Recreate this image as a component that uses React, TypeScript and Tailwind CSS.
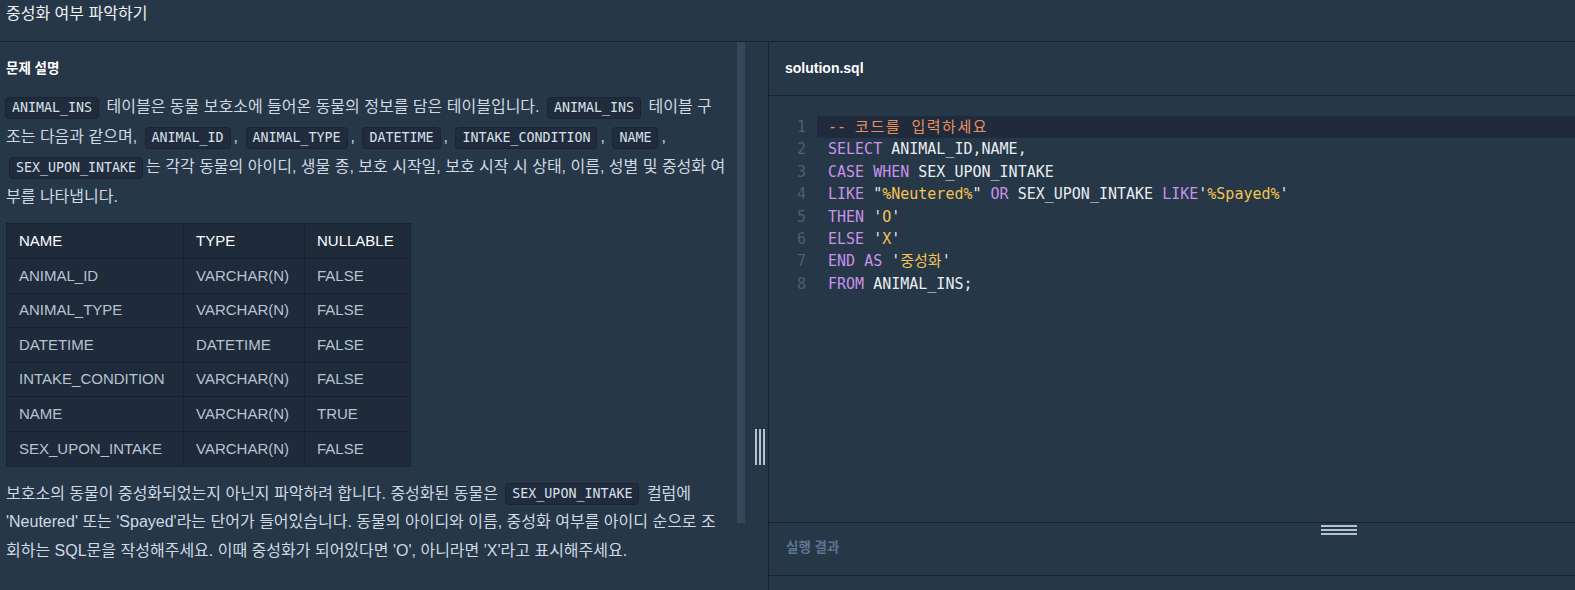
import React from 'react';

const sans = "font-['Liberation_Sans','Noto_Sans_CJK_KR',sans-serif]";

function Code({ children, first }: { children: React.ReactNode; first?: boolean }) {
  return (
    <code
      className={`${first ? 'mr-[3px] -ml-[1px]' : 'mx-[3px]'} inline-block rounded-[4px] border border-[#1b2433] bg-[#202b3d] px-[6px] align-middle font-['DejaVu_Sans_Mono',monospace] text-[13.3px] leading-[20px] text-[#d9e1e8]`}
    >
      {children}
    </code>
  );
}

const columns = [
  ['ANIMAL_ID', 'VARCHAR(N)', 'FALSE'],
  ['ANIMAL_TYPE', 'VARCHAR(N)', 'FALSE'],
  ['DATETIME', 'DATETIME', 'FALSE'],
  ['INTAKE_CONDITION', 'VARCHAR(N)', 'FALSE'],
  ['NAME', 'VARCHAR(N)', 'TRUE'],
  ['SEX_UPON_INTAKE', 'VARCHAR(N)', 'FALSE'],
];

const K = ({ t }: { t: string }) => <span className="text-[#c792ea]">{t}</span>;
const S = ({ t }: { t: string }) => <span className="text-[#f5c451]">{t}</span>;
const Q = ({ t }: { t: string }) => <span className="text-[#e6e9ee]">{t}</span>;

const lines: React.ReactNode[] = [
  <span className="text-[#ea8f61]">
    -- <span className="tracking-[1.5px]">코드를 입력하세요</span>
  </span>,
  <>
    <K t="SELECT" /> ANIMAL_ID,NAME,
  </>,
  <>
    <K t="CASE" /> <K t="WHEN" /> SEX_UPON_INTAKE
  </>,
  <>
    <K t="LIKE" /> <Q t={'"'} />
    <S t="%Neutered%" />
    <Q t={'"'} /> <K t="OR" /> SEX_UPON_INTAKE <K t="LIKE" />
    <Q t="'" />
    <S t="%Spayed%" />
    <Q t="'" />
  </>,
  <>
    <K t="THEN" /> <Q t="'" />
    <S t="O" />
    <Q t="'" />
  </>,
  <>
    <K t="ELSE" /> <Q t="'" />
    <S t="X" />
    <Q t="'" />
  </>,
  <>
    <K t="END" /> <K t="AS" /> <Q t="'" />
    <S t="중성화" />
    <Q t="'" />
  </>,
  <>
    <K t="FROM" /> ANIMAL_INS;
  </>,
];

export default function App() {
  return (
    <div className={`flex h-screen w-full flex-col overflow-hidden bg-[#263747] ${sans}`}>
      {/* title bar */}
      <div className="h-[42px] shrink-0 border-b border-[#172130] pl-[6px] pt-[3px]">
        <h1 className="text-[16px] leading-[22px] text-[#eef1f4]">중성화 여부 파악하기</h1>
      </div>

      <div className="flex min-h-0 flex-1">
        {/* left: description */}
        <div className="flex w-[769px] shrink-0 border-r border-[#172130]">
          <div className="w-[737px] overflow-hidden pl-[6px] pr-[11px] pt-[17px]">
            <h2 className="text-[13.5px] font-bold leading-[20px] text-white">문제 설명</h2>
            <p className="mt-[13px] text-[16px] leading-[30px] text-[#d0d9e2]">
              <Code first>ANIMAL_INS</Code> 테이블은 동물 보호소에 들어온 동물의 정보를 담은 테이블입니다. <Code>ANIMAL_INS</Code> 테이블 구조는 다음과 같으며, <Code>ANIMAL_ID</Code>, <Code>ANIMAL_TYPE</Code>, <Code>DATETIME</Code>, <Code>INTAKE_CONDITION</Code>, <Code>NAME</Code>, <Code>SEX_UPON_INTAKE</Code>는 각각 동물의 아이디, 생물 종, 보호 시작일, 보호 시작 시 상태, 이름, 성별 및 중성화 여부를 나타냅니다.
            </p>
            <table className="mt-[11px] border-collapse bg-[#1f2a3b] text-[15px] text-[#b7c4d0]">
              <thead>
                <tr className="h-[35px]">
                  <th className="w-[177px] border border-[#172130] px-3 text-left font-normal text-white">NAME</th>
                  <th className="w-[121px] border border-[#172130] px-3 text-left font-normal text-white">TYPE</th>
                  <th className="w-[106px] border border-[#172130] px-3 text-left font-normal text-white">NULLABLE</th>
                </tr>
              </thead>
              <tbody>
                {columns.map((row) => (
                  <tr key={row[0]} className="h-[34.6px]">
                    {row.map((cell, i) => (
                      <td key={i} className="border border-[#172130] px-3">
                        {cell}
                      </td>
                    ))}
                  </tr>
                ))}
              </tbody>
            </table>
            <p className="mt-[13px] text-[16px] leading-[28.5px] text-[#d0d9e2]">
              보호소의 동물이 중성화되었는지 아닌지 파악하려 합니다. 중성화된 동물은 <Code>SEX_UPON_INTAKE</Code> 컬럼에 'Neutered' 또는 'Spayed'라는 단어가 들어있습니다. 동물의 아이디와 이름, 중성화 여부를 아이디 순으로 조회하는 SQL문을 작성해주세요. 이때 중성화가 되어있다면 'O', 아니라면 'X'라고 표시해주세요.
            </p>
          </div>
          {/* scrollbar */}
          <div className="w-[8px] shrink-0">
            <div className="h-[481px] bg-[#37475a]" />
          </div>
          {/* gutter handle */}
          <div className="flex-1 pl-[10px] pt-[387px]">
            <div className="flex h-[36px] gap-[2px]">
              <div className="w-[2px] bg-[#b6c3cf]" />
              <div className="w-[2px] bg-[#b6c3cf]" />
              <div className="w-[2px] bg-[#b6c3cf]" />
            </div>
          </div>
        </div>

        {/* right: editor */}
        <div className="flex min-w-0 flex-1 flex-col">
          <div className="flex h-[54px] shrink-0 items-center border-b border-[#172130] pl-[16px]">
            <span className="text-[14px] font-bold text-white">solution.sql</span>
          </div>
          <div className="flex-1 pt-[20px] font-['DejaVu_Sans_Mono','Noto_Sans_CJK_KR',monospace] text-[15px] leading-[22.4px] text-[#e9edf2]">
            {lines.map((line, i) => (
              <div key={i} className="flex">
                <div className="w-[48px] shrink-0 pr-[11px] text-right text-[#4d5f72]">{i + 1}</div>
                <div className={`flex-1 whitespace-pre pl-[11px] ${i === 0 ? 'bg-[#1f2b3c]' : ''}`}>{line}</div>
              </div>
            ))}
          </div>
          <div className="relative flex h-[54px] shrink-0 items-center border-y border-[#172130] pb-[1px] pl-[17px]">
            <div className="absolute left-[552px] top-[2px] flex w-[36px] flex-col gap-[2px]">
              <div className="h-[2px] bg-[#b6c3cf]" />
              <div className="h-[2px] bg-[#b6c3cf]" />
              <div className="h-[2px] bg-[#b6c3cf]" />
            </div>
            <span className="text-[13.5px] font-bold text-[#5b7590]">실행 결과</span>
          </div>
          <div className="h-[14px] shrink-0" />
        </div>
      </div>
    </div>
  );
}
